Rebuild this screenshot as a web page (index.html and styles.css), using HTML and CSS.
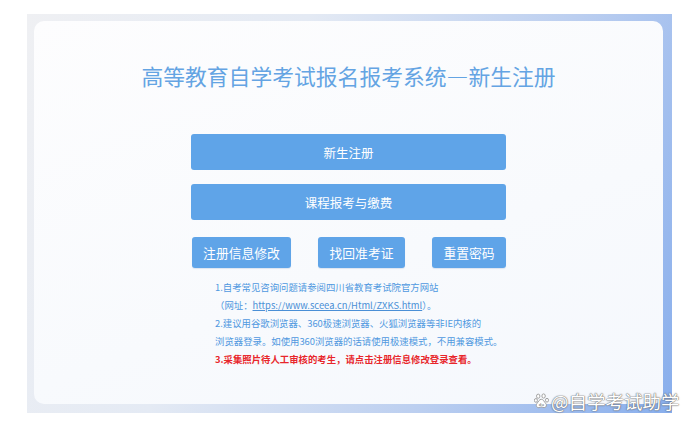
FILE: index.html
```html
<!DOCTYPE html>
<html lang="zh-CN">
<head>
<meta charset="utf-8">
<title>高等教育自学考试报名报考系统—新生注册</title>
<link rel="stylesheet" href="styles.css">
</head>
<body>
<div class="frame">
  <div class="card">
    <h1 class="title">高等教育自学考试报名报考系统—新生注册</h1>
    <div class="actions">
      <a class="btn btn-wide">新生注册</a>
      <a class="btn btn-wide">课程报考与缴费</a>
      <div class="btn-row">
        <a class="btn btn-small btn-a">注册信息修改</a>
        <a class="btn btn-small btn-b">找回准考证</a>
        <a class="btn btn-small btn-c">重置密码</a>
      </div>
      <div class="notes">
        <p>1.自考常见咨询问题请参阅四川省教育考试院官方网站</p>
        <p>（网址：<span class="link">https://www.sceea.cn/Html/ZXKS.html</span>）。</p>
        <p>2.建议用谷歌浏览器、360极速浏览器、火狐浏览器等非IE内核的</p>
        <p>浏览器登录。如使用360浏览器的话请使用极速模式，不用兼容模式。</p>
        <p class="warn">3.采集照片待人工审核的考生，请点击注册信息修改登录查看。</p>
      </div>
    </div>
  </div>
</div>
<div class="watermark">
  <svg class="paw" viewBox="0 0 16 16" width="16" height="16">
    <g fill="#ffffff" stroke="#9a9a9a" stroke-width="0.9">
      <ellipse cx="4.2" cy="3.2" rx="1.7" ry="2.1"/>
      <ellipse cx="9.6" cy="3" rx="1.7" ry="2.1"/>
      <ellipse cx="1.9" cy="7.4" rx="1.5" ry="1.9"/>
      <ellipse cx="13" cy="7.2" rx="1.5" ry="1.9"/>
      <path d="M7.3 6.3 C5.2 6.3 4.4 8.8 3 10.4 C1.6 12 2.4 14.8 4.8 14.6 C6 14.5 6.5 14 7.4 14 C8.4 14 9 14.6 10.2 14.6 C12.6 14.6 13.1 11.8 11.6 10.3 C10.2 8.8 9.4 6.3 7.3 6.3 Z"/>
    </g>
    <text x="7.4" y="13.3" text-anchor="middle" font-size="4.2" font-family="Liberation Sans, sans-serif" font-weight="bold" fill="#8a8a8a">du</text>
  </svg>
  <span class="wm-text">@自学考试助学</span>
</div>
</body>
</html>
```

FILE: styles.css
```css
html, body {
  margin: 0;
  padding: 0;
  background: #ffffff;
}

body {
  width: 695px;
  height: 426px;
  overflow: hidden;
  position: relative;
  font-family: "Noto Sans CJK SC", "Noto Sans", sans-serif;
}

.frame {
  margin: 14px 0 0 27px;
  width: 645px;
  height: 399px;
  box-sizing: border-box;
  padding: 7px 9px 9px 7px;
  background: linear-gradient(112deg, #eff0f3 0%, #e4eaf4 35%, #bccff0 68%, #88aeec 100%);
}

.card {
  height: 100%;
  box-sizing: border-box;
  border-radius: 10px;
  background: linear-gradient(160deg, #fdfdfe 0%, #f8fafd 60%, #f5f8fd 100%);
  padding-top: 42px;
  display: flex;
  flex-direction: column;
  align-items: center;
}

.title {
  margin: 0;
  font-weight: normal;
  font-size: 21.8px;
  line-height: 26px;
  color: #64a4e3;
  letter-spacing: 0;
}

.actions {
  margin-top: 45px;
  width: 315px;
  display: flex;
  flex-direction: column;
}

.btn {
  display: flex;
  align-items: center;
  justify-content: center;
  background: #5fa4e8;
  color: #ffffff;
  border-radius: 3px;
  font-size: 12.5px;
  text-decoration: none;
}

.btn-wide {
  height: 36px;
}

.btn-wide + .btn-wide {
  margin-top: 14px;
}

.btn-row {
  margin-top: 17px;
  display: flex;
  justify-content: space-between;
  padding-left: 1px;
}

.btn-small {
  height: 31px;
  font-size: 12.8px;
  box-shadow: 0 1px 1px rgba(60, 110, 170, 0.15);
}

.btn-a { width: 99px; }
.btn-b { width: 87px; }
.btn-c { width: 74px; }

.notes {
  margin: 10px 0 0 24px;
  width: 320px;
  color: #4f98e0;
  font-size: 9.4px;
  line-height: 18px;
}

.notes p {
  margin: 0;
  white-space: nowrap;
}

.link {
  text-decoration: underline;
  color: #4a8fd6;
}

.warn {
  color: #e8262b;
  font-weight: bold;
}

.watermark {
  position: absolute;
  left: 534px;
  top: 389px;
  display: flex;
  align-items: center;
  gap: 1px;
}

.paw {
  display: block;
}

.wm-text {
  font-size: 18.5px;
  line-height: 24px;
  color: #ffffff;
  text-shadow: 0 0 1px #6f6f6f, 0 0 1px #6f6f6f, 0 0 2px rgba(0, 0, 0, 0.35);
}
```
